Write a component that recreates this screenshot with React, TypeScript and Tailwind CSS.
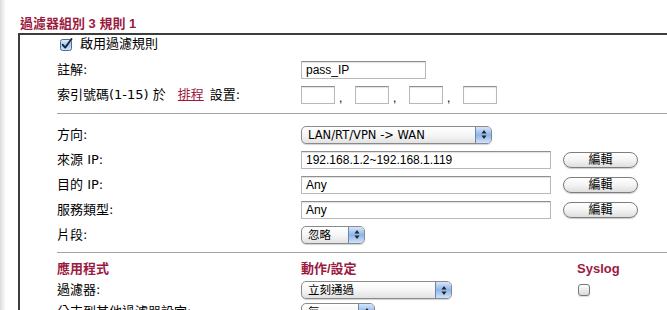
import React from 'react';

const FONT = "font-[family-name:'Liberation_Sans','Noto_Sans_CJK_TC',sans-serif]";
const LABEL_FONT = "font-[family-name:'DejaVu_Sans','Noto_Sans_CJK_TC',sans-serif]";

const TextField: React.FC<{ width: string; value?: string }> = ({ width, value }) => (
  <div
    className={`${width} h-[18px] border border-[#b9b9b9] border-t-[#8f8f8f] bg-white shadow-[inset_0_1px_1px_rgba(0,0,0,0.12)] pl-[4px] text-[12px] leading-[16px] text-black whitespace-nowrap overflow-hidden`}
  >
    {value}
  </div>
);

const Stepper: React.FC = () => (
  <div className="w-[16px] flex items-center justify-center border-l border-[#6f86a8] bg-gradient-to-b from-[#d6e6fb] via-[#8db5ea] to-[#cfe2fb]">
    <svg width="6" height="11" viewBox="0 0 6 11">
      <path d="M3 1 L5.5 4.5 L0.5 4.5 Z" fill="#222" />
      <path d="M3 10 L5.5 6.5 L0.5 6.5 Z" fill="#222" />
    </svg>
  </div>
);

const Select: React.FC<{ width: string; value: string }> = ({ width, value }) => (
  <div
    className={`${width} h-[18px] flex rounded-[5px] border border-[#8a8a8a] bg-gradient-to-b from-white via-[#f6f6f6] to-[#e2e2e2] shadow-[0_1px_1px_rgba(0,0,0,0.18)] overflow-hidden`}
  >
    <div className={`flex-1 pl-[6px] text-[11.5px] leading-[16px] text-black whitespace-nowrap ${LABEL_FONT}`}>{value}</div>
    <Stepper />
  </div>
);

const EditButton: React.FC = () => (
  <div className="ml-[12px] w-[75px] h-[16px] rounded-full border border-[#7d7d7d] bg-gradient-to-b from-white via-[#f4f4f4] to-[#dedede] shadow-[0_1px_1px_rgba(0,0,0,0.2)] flex items-center justify-center text-[12px] leading-none text-black">
    編輯
  </div>
);

const Row: React.FC<{ label: React.ReactNode; children?: React.ReactNode }> = ({ label, children }) => (
  <div className="flex h-[25px] items-center">
    <div className={`w-[244px] text-[13px] text-black whitespace-nowrap ${LABEL_FONT}`}>{label}</div>
    <div className="flex items-center">{children}</div>
  </div>
);

export default function App() {
  return (
    <div className={`flex min-h-[310px] w-full bg-white overflow-hidden ${FONT}`}>
      {/* page edge shading */}
      <div className="w-[6px] shrink-0 bg-gradient-to-r from-[#dcdcdc] to-white" />

      <div className="flex-1 pl-[12px] pt-[16px]">
        <div className="ml-[2px] h-[16px] leading-[16px] text-[13px] font-bold text-[#9b1a40] whitespace-nowrap">
          過濾器組別 3 規則 1
        </div>

        <div className="mt-[1px] border-t-2 border-l-2 border-[#3d3d3d] pl-[37px] pb-[20px]">
          {/* enable */}
          <div className="flex h-[18px] items-center pl-[3px]">
            <svg width="13" height="13" viewBox="0 0 13 13">
              <defs>
                <linearGradient id="cb" x1="0" y1="0" x2="0" y2="1">
                  <stop offset="0" stopColor="#e4eefb" />
                  <stop offset="0.5" stopColor="#a9c8ee" />
                  <stop offset="1" stopColor="#d3e4f9" />
                </linearGradient>
              </defs>
              <rect x="0.5" y="1.5" width="11" height="11" rx="2" fill="url(#cb)" stroke="#4d6f9b" />
              <path d="M2.8 6.8 L5.2 9.6 L11.5 1" fill="none" stroke="#142640" strokeWidth="1.9" strokeLinecap="round" strokeLinejoin="round" />
            </svg>
            <span className={`ml-[7px] text-[13px] text-black ${LABEL_FONT}`}>啟用過濾規則</span>
          </div>

          <div className="mt-[4px]">
            <Row label="註解:">
              <TextField width="w-[125px]" value="pass_IP" />
            </Row>
            <Row
              label={
                <>
                  索引號碼(1-15) 於
                  <span className="ml-[12px] text-[#9b1a40] underline">排程</span>
                  <span className="ml-[6px]">設置:</span>
                </>
              }
            >
              <TextField width="w-[34px]" />
              <span className="w-[20px] pl-[4px] pt-[6px] text-[12px]">,</span>
              <TextField width="w-[34px]" />
              <span className="w-[20px] pl-[4px] pt-[6px] text-[12px]">,</span>
              <TextField width="w-[34px]" />
              <span className="w-[20px] pl-[4px] pt-[6px] text-[12px]">,</span>
              <TextField width="w-[34px]" />
            </Row>
          </div>

          <div className="mt-[6px] h-px bg-[#a3a3a3]" />

          <div className="mt-[8px]">
            <Row label="方向:">
              <Select width="w-[191px]" value="LAN/RT/VPN -> WAN" />
            </Row>
            <Row label="來源 IP:">
              <TextField width="w-[250px]" value="192.168.1.2~192.168.1.119" />
              <EditButton />
            </Row>
            <Row label="目的 IP:">
              <TextField width="w-[250px]" value="Any" />
              <EditButton />
            </Row>
            <Row label="服務類型:">
              <TextField width="w-[250px]" value="Any" />
              <EditButton />
            </Row>
            <Row label="片段:">
              <Select width="w-[64px]" value="忽略" />
            </Row>
          </div>

          <div className="mt-[5px] h-px bg-[#a3a3a3]" />

          <div className="mt-[6px] grid grid-cols-[244px_276px_1fr]">
            <div className="h-[20px] flex items-center text-[13px] font-bold text-[#9b1a40]">應用程式</div>
            <div className="h-[20px] flex items-center text-[13px] font-bold text-[#9b1a40]">動作/設定</div>
            <div className="h-[20px] flex items-center text-[13px] font-bold text-[#9b1a40]">Syslog</div>

            <div className={`h-[22px] flex items-center text-[13px] text-black ${LABEL_FONT}`}>過濾器:</div>
            <div className="h-[22px] flex items-center">
              <Select width="w-[151px]" value="立刻通過" />
            </div>
            <div className="h-[22px] flex items-center pl-[1px]">
              <div className="w-[12px] h-[12px] rounded-[3px] border border-[#777] bg-gradient-to-b from-white to-[#d9d9d9] shadow-[0_1px_1px_rgba(0,0,0,0.15)]" />
            </div>

            <div className={`h-[22px] flex items-center text-[13px] text-black ${LABEL_FONT}`}>分支到其他過濾器設定:</div>
            <div className="h-[22px] flex items-center">
              <Select width="w-[74px]" value="無" />
            </div>
            <div />
          </div>
        </div>
      </div>
    </div>
  );
}
